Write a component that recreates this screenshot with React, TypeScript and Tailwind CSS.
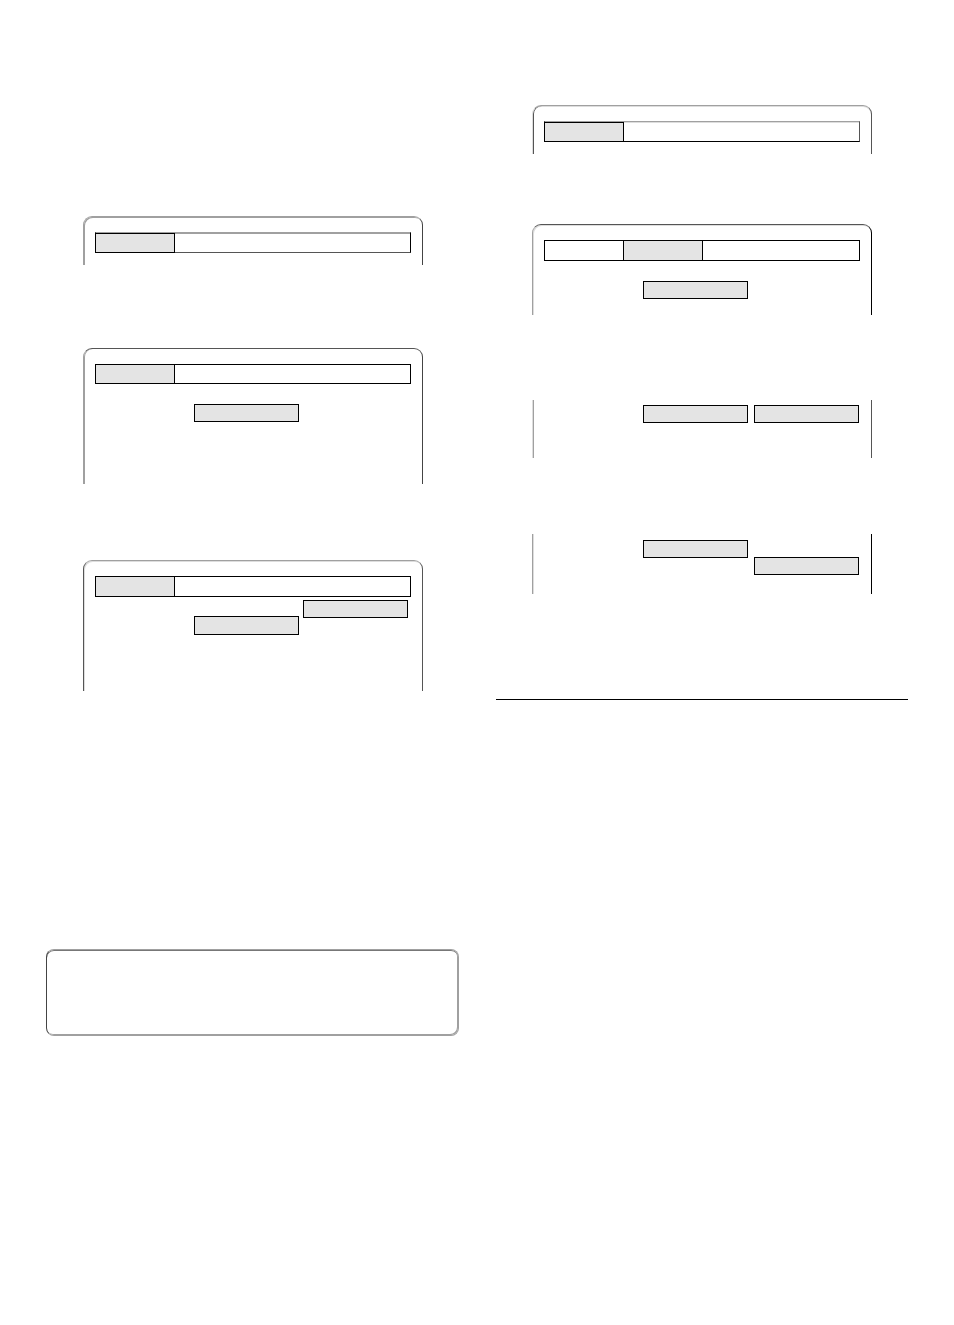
import React from 'react';
import clsx from 'clsx';

type ScreenProps = {
  className?: string;
  children?: React.ReactNode;
};

// Display frame with rounded top corners, left open at the bottom
function Screen({ className, children }: ScreenProps) {
  return (
    <div className={clsx('rounded-t-[9px] border border-b-0 px-[11px] pt-[15px]', className)}>
      {children}
    </div>
  );
}

// Lower part of a display, only the sides are drawn
function ScreenSection({ className, children }: ScreenProps) {
  return <div className={clsx('border-x px-[11px]', className)}>{children}</div>;
}

type MenuBarProps = {
  selected: number;
  tabs?: number;
  soft?: boolean;
  className?: string;
};

function MenuBar({ selected, tabs = 1, soft = false, className }: MenuBarProps) {
  return (
    <div className={clsx('flex border', soft ? 'border-t-[#a0a0a0]' : 'border-t-black', className)}>
      {Array.from({ length: tabs }, (_, index) => (
        <div
          key={index}
          className={clsx(
            '-mb-px -ml-px w-20 border border-black',
            soft ? 'mt-0' : '-mt-px',
            index === selected ? 'bg-[#e4e4e4]' : 'bg-white'
          )}
        />
      ))}
    </div>
  );
}

function Item({ className }: { className?: string }) {
  return <div className={clsx('w-[105px] border border-black bg-[#e4e4e4]', className)} />;
}

export default function App() {
  return (
    <main className="grid min-h-screen grid-cols-2 gap-x-[38px] bg-white px-[46px]">
      <section className="pt-[216px]">
        <div className="pr-[35px] pl-[37px]">
          <Screen className="h-[49px] border-t-[#a0a0a0] border-r-[#444] border-l-[#a0a0a0] shadow-[inset_1px_1px_0_#a0a0a0]">
            <MenuBar
              selected={0}
              soft
              className="h-[21px] border-r-black border-b-[#555] border-l-black shadow-[inset_0_1px_0_#a0a0a0]"
            />
          </Screen>

          <Screen className="mt-[83px] h-[136px] border-t-[#555] border-r-[#444] border-l-[#a0a0a0] shadow-[inset_1px_0_0_#a0a0a0]">
            <MenuBar selected={0} className="h-5 border-black" />
            <div className="mt-5 flex items-start pl-[99px]">
              <Item className="h-[18px]" />
            </div>
          </Screen>

          <Screen className="mt-[76px] h-[131px] border-t-[#a0a0a0] border-r-[#555] border-l-[#555] shadow-[inset_1px_1px_0_#ddd]">
            <MenuBar selected={0} className="h-[21px] border-black" />
            <div className="mt-[3px] flex items-start gap-1 pl-[99px]">
              <Item className="mt-4 h-[19px]" />
              <Item className="h-[18px]" />
            </div>
          </Screen>
        </div>

        <div className="mt-[258px] -mr-px h-[87px] rounded-[8px] border border-t-[#a0a0a0] border-r-[#a0a0a0] border-b-[#a0a0a0] border-l-[#444] shadow-[inset_-1px_-1px_0_#a0a0a0,inset_0_1px_0_#777]" />
      </section>

      <section className="pt-[105px]">
        <div className="px-9">
          <Screen className="h-[49px] border-t-[#a0a0a0] border-r-[#555] border-l-[#ddd] shadow-[inset_1px_0_0_#555,inset_0_1px_0_#ddd]">
            <MenuBar
              selected={0}
              soft
              className="h-[21px] border-r-[#555] border-b-black border-l-black shadow-[inset_0_1px_0_#ddd]"
            />
          </Screen>

          <Screen className="mt-[70px] h-[91px] border-t-[#555] border-r-black border-l-[#a0a0a0] shadow-[inset_1px_1px_0_#ddd]">
            <MenuBar selected={1} tabs={2} className="h-[21px] border-black" />
            <div className="mt-5 flex items-start pl-[99px]">
              <Item className="h-[18px]" />
            </div>
          </Screen>

          <ScreenSection className="mt-[85px] h-[58px] border-r-[#555] border-l-[#ddd] pt-[5px] shadow-[inset_1px_0_0_#a0a0a0]">
            <div className="flex items-start gap-1.5 pl-[99px]">
              <Item className="h-[18px]" />
              <Item className="h-[18px]" />
            </div>
          </ScreenSection>

          <ScreenSection className="mt-[76px] h-[60px] border-r-black border-l-[#a0a0a0] pt-[6px] shadow-[inset_1px_0_0_#ddd]">
            <div className="flex items-start gap-1.5 pl-[99px]">
              <Item className="h-[18px]" />
              <Item className="mt-[17px] h-[18px]" />
            </div>
          </ScreenSection>
        </div>

        <hr className="mt-[105px] border-t border-black" />
      </section>
    </main>
  );
}
